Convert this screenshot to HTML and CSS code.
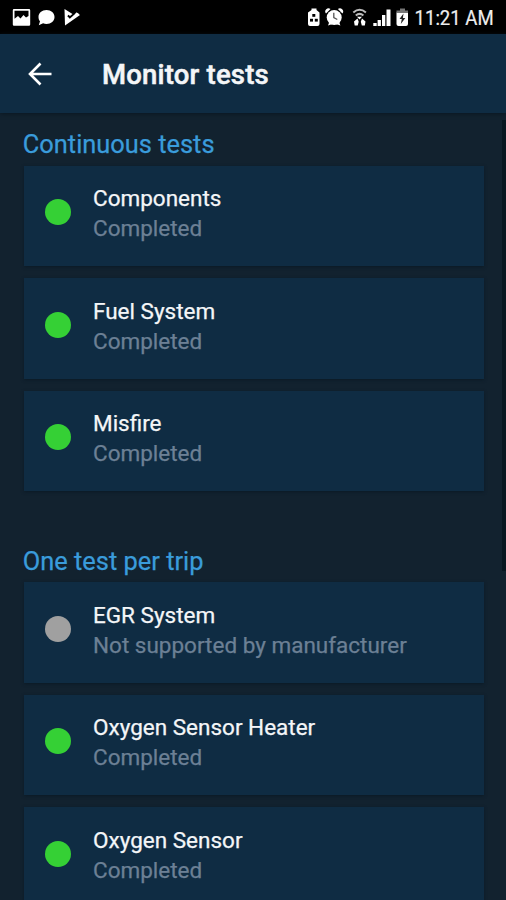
FILE: index.html
```html
<!DOCTYPE html>
<html lang="en">
<head>
<meta charset="utf-8">
<title>Monitor tests</title>
<link rel="stylesheet" href="styles.css">
</head>
<body>
<div class="screen">
  <div class="status">
    <svg class="status-icons" width="90" height="34" viewBox="0 0 90 34" fill="#fff">
      <path fill-rule="evenodd" d="M14 9h15a1.200 1.200 0 0 1 1.200 1.200v14.300a1.200 1.200 0 0 1-1.200 1.200H14a1.200 1.200 0 0 1-1.200-1.200V10.200A1.200 1.200 0 0 1 14 9zM14.500 10.700v8l3.500-2.700 2.500 2.500 3-3.500 2.500 2.500 2.500-1.500v-5.300z"/>
      <path d="M46.500 10c4.600 0 8 2.900 8 6.900s-3.400 7-8 7c-1.300 0-2.400-.2-3.400-.6L38.800 25.300l1.200-4c-1-1.200-1.500-2.700-1.500-4.400 0-4 3.400-6.900 8-6.900z"/>
      <path d="M64.500 9l8 5-2.500 2-1.500-1.300-1.200 1.600 2.500 2.500 7-6.300 3.200 2.600-15 10.300z"/>
      <path d="M76.500 12.500l2.200 1.300-2.400 2-1.400-1.500z"/>
    </svg>
    <div class="status-right">
      <svg width="106" height="34" viewBox="304 0 106 34" fill="#fff">
        <path d="M311.500 8.500h5v1.500l3 2.500V24a2 2 0 0 1-2 2h-7.500a2 2 0 0 1-2-2V12.500l3.500-2.500z"/>
        <g fill="#000"><rect x="312.300" y="14" width="3" height="2.800"/><rect x="310" y="18.800" width="3" height="2.800"/><rect x="314.800" y="18.800" width="3" height="2.800"/></g>
        <circle cx="334.200" cy="17.500" r="7.500"/>
        <path d="M326 13.500a3.200 3.200 0 0 1 4.500-4.500zM342.400 13.500a3.200 3.200 0 0 0-4.500-4.500zM328 25.500l1.500-4 3 2.500zM340.400 25.500l-1.500-4-3 2.500z"/>
        <path d="M333.800 12.800v4.700l3.500 2" fill="none" stroke="#555" stroke-width="1.300"/>
        <path d="M353.300 12.500q6.300-5.500 12.600 0M355.800 15.500q3.800-3.200 7.600 0" fill="none" stroke="#bbb" stroke-width="2"/>
        <path d="M357 16.700h5l-2.500 2.800zM354 21.500l3.500-3 1.200 3.200-1 3.800h-3zM365.500 21.500l-3.500-3-1.200 3.200 1 3.800h3z"/>
        <path d="M373.300 23h3.400v3h-3.400zM377.600 20h3.300v6h-3.300zM382 15h3.300v11H382zM386.500 9.500h4V26h-4z"/>
        <path d="M396.500 12.500h11.500V24a2 2 0 0 1-2 2h-7.500a2 2 0 0 1-2-2z"/>
        <path fill="#777" d="M400 8.500h5v2h3v2.500h-11.500v-2.500h3.500z"/>
        <path fill="#222" d="M403.500 13.500l-4 5.500h2.300l-1 5 4.500-6h-2.400z"/>
      </svg>
      <span class="clock">11:21 AM</span>
    </div>
  </div>
  <header class="bar">
    <svg class="back" width="24" height="24" viewBox="0 0 24 24" fill="none" stroke="#fff" stroke-width="2.600"><path d="M23.500 12H2.500M12.500 1.500L2 12l10.500 10.500"/></svg>
    <h1>Monitor tests</h1>
  </header>
  <main class="content">
    <div class="scrollbar"></div>
    <section>
      <h2>Continuous tests</h2>
      <div class="card"><i class="dot"></i><div><p class="name">Components</p><p class="state">Completed</p></div></div>
      <div class="card"><i class="dot"></i><div><p class="name">Fuel System</p><p class="state">Completed</p></div></div>
      <div class="card"><i class="dot"></i><div><p class="name">Misfire</p><p class="state">Completed</p></div></div>
    </section>
    <section>
      <h2>One test per trip</h2>
      <div class="card"><i class="dot off"></i><div><p class="name">EGR System</p><p class="state">Not supported by manufacturer</p></div></div>
      <div class="card"><i class="dot"></i><div><p class="name">Oxygen Sensor Heater</p><p class="state">Completed</p></div></div>
      <div class="card"><i class="dot"></i><div><p class="name">Oxygen Sensor</p><p class="state">Completed</p></div></div>
    </section>
  </main>
</div>
</body>
</html>
```
FILE: styles.css
```css
* { box-sizing: border-box; margin: 0; padding: 0; }
body { background: #12222f; font-family: Roboto, "Liberation Sans", sans-serif; color: #f4f6f8; }
.screen { width: 506px; height: 900px; overflow: hidden; display: flex; flex-direction: column; }
.status { height: 34px; flex: none; background: #000; display: flex; justify-content: space-between; }
.status svg { display: block; }
.status-right { display: flex; }
.clock { width: 96px; padding-left: 5px; font-size: 20.500px; line-height: 36px; white-space: nowrap; color: #eee; transform: scaleX(.905); transform-origin: 0 50%; -webkit-text-stroke: .2px; }
.bar { height: 79px; flex: none; background: #0f2c43; display: flex; align-items: center; padding-left: 28px; box-shadow: 0 1px 4px #0a1721; }
.bar h1 { margin-left: 50px; padding-top: 3px; font-size: 27.500px; font-weight: 500; line-height: 32px; letter-spacing: .2px; -webkit-text-stroke: .5px; }
.content { flex: 1; min-height: 0; position: relative; padding: 0 22px 0 23.500px; }
.scrollbar { position: absolute; right: 0; top: 7px; width: 4px; height: 451px; background: #081721; }
section { height: 416.700px; }
h2 { height: 52.500px; margin-left: -.7px; padding-top: 15px; font-size: 25.400px; font-weight: 400; line-height: 32.500px; color: #3a9cdb; -webkit-text-stroke: .25px; }
.card { height: 100.500px; margin-bottom: 12px; background: #0f2c43; display: flex; padding: 17.500px 0 0 21.500px; box-shadow: 0 1px 3px #0b1a26; }
.dot { width: 26px; height: 26px; border-radius: 50%; background: #35d035; margin: 16.200px 22px 0 0; flex: none; }
.off { background: #a0a0a0; }
.name, .state { font-size: 22.500px; line-height: 30.300px; white-space: nowrap; -webkit-text-stroke: .25px; }
.state { color: #6c8095; }
```
